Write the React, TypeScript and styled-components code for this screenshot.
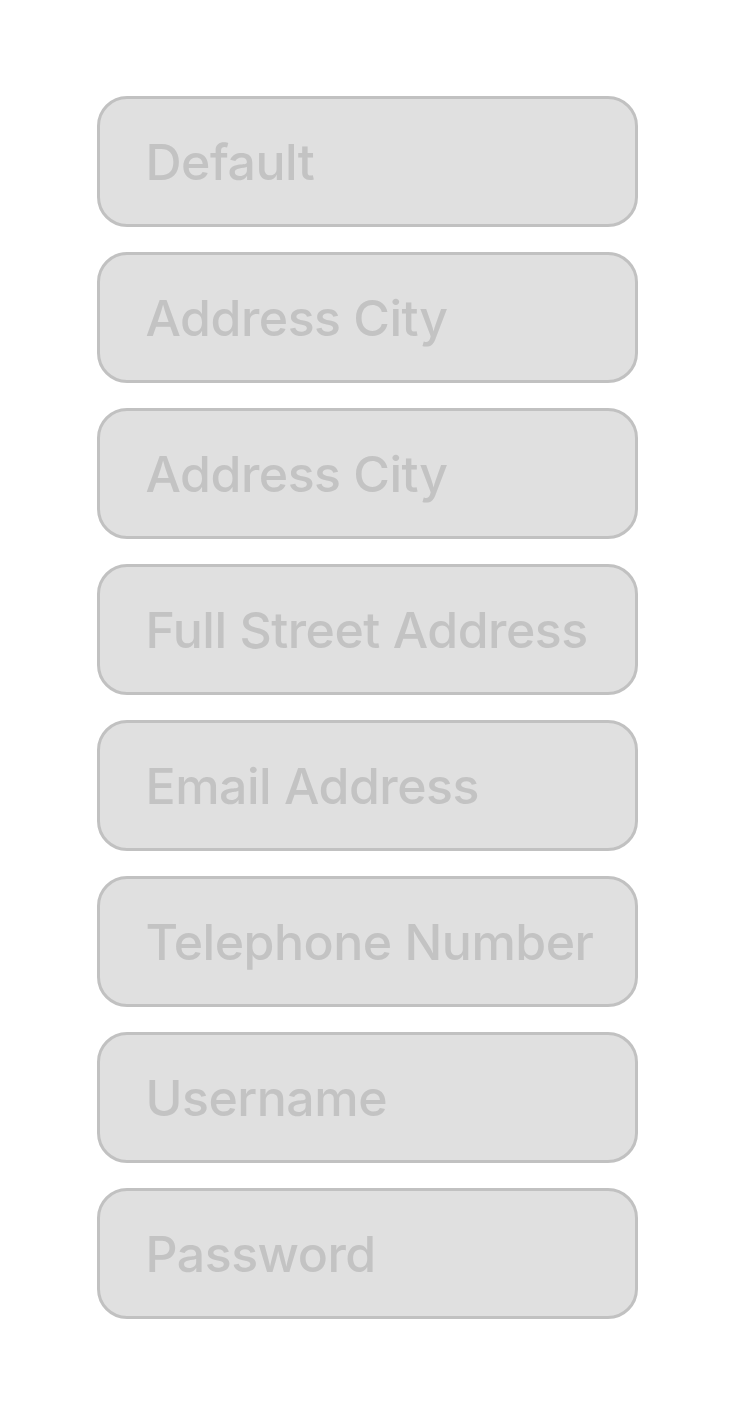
import React from 'react';
import styled, { createGlobalStyle } from 'styled-components';

const GlobalStyle = createGlobalStyle`
    html, body {
        margin: 0;
        padding: 0;
        background: #ffffff;
    }
`;

const Page = styled.div`
    display: flex;
    flex-direction: column;
    align-items: center;
    gap: 25px;
    padding-top: 96px;
`;

const Field = styled.input`
    box-sizing: border-box;
    width: 541px;
    height: 131px;
    padding: 0 0 0 46px;
    border: 3px solid #c1c1c1;
    border-radius: 30px;
    background-color: #e0e0e0;
    font-family: Inter, 'Noto Sans', sans-serif;
    font-size: 50px;
    font-weight: 500;
    letter-spacing: -0.5px;
    color: #333;
    outline: none;

    &::placeholder {
        color: #c3c3c3;
        opacity: 1;
    }
`;

const placeholders = [
    'Default',
    'Address City',
    'Address City',
    'Full Street Address',
    'Email Address',
    'Telephone Number',
    'Username',
    'Password',
];

const App = () => (
    <>
        <GlobalStyle />
        <Page>
            {placeholders.map((text, i) => (
                <Field key={i} placeholder={text} type={text === 'Password' ? 'password' : 'text'} />
            ))}
        </Page>
    </>
);

export default App;
